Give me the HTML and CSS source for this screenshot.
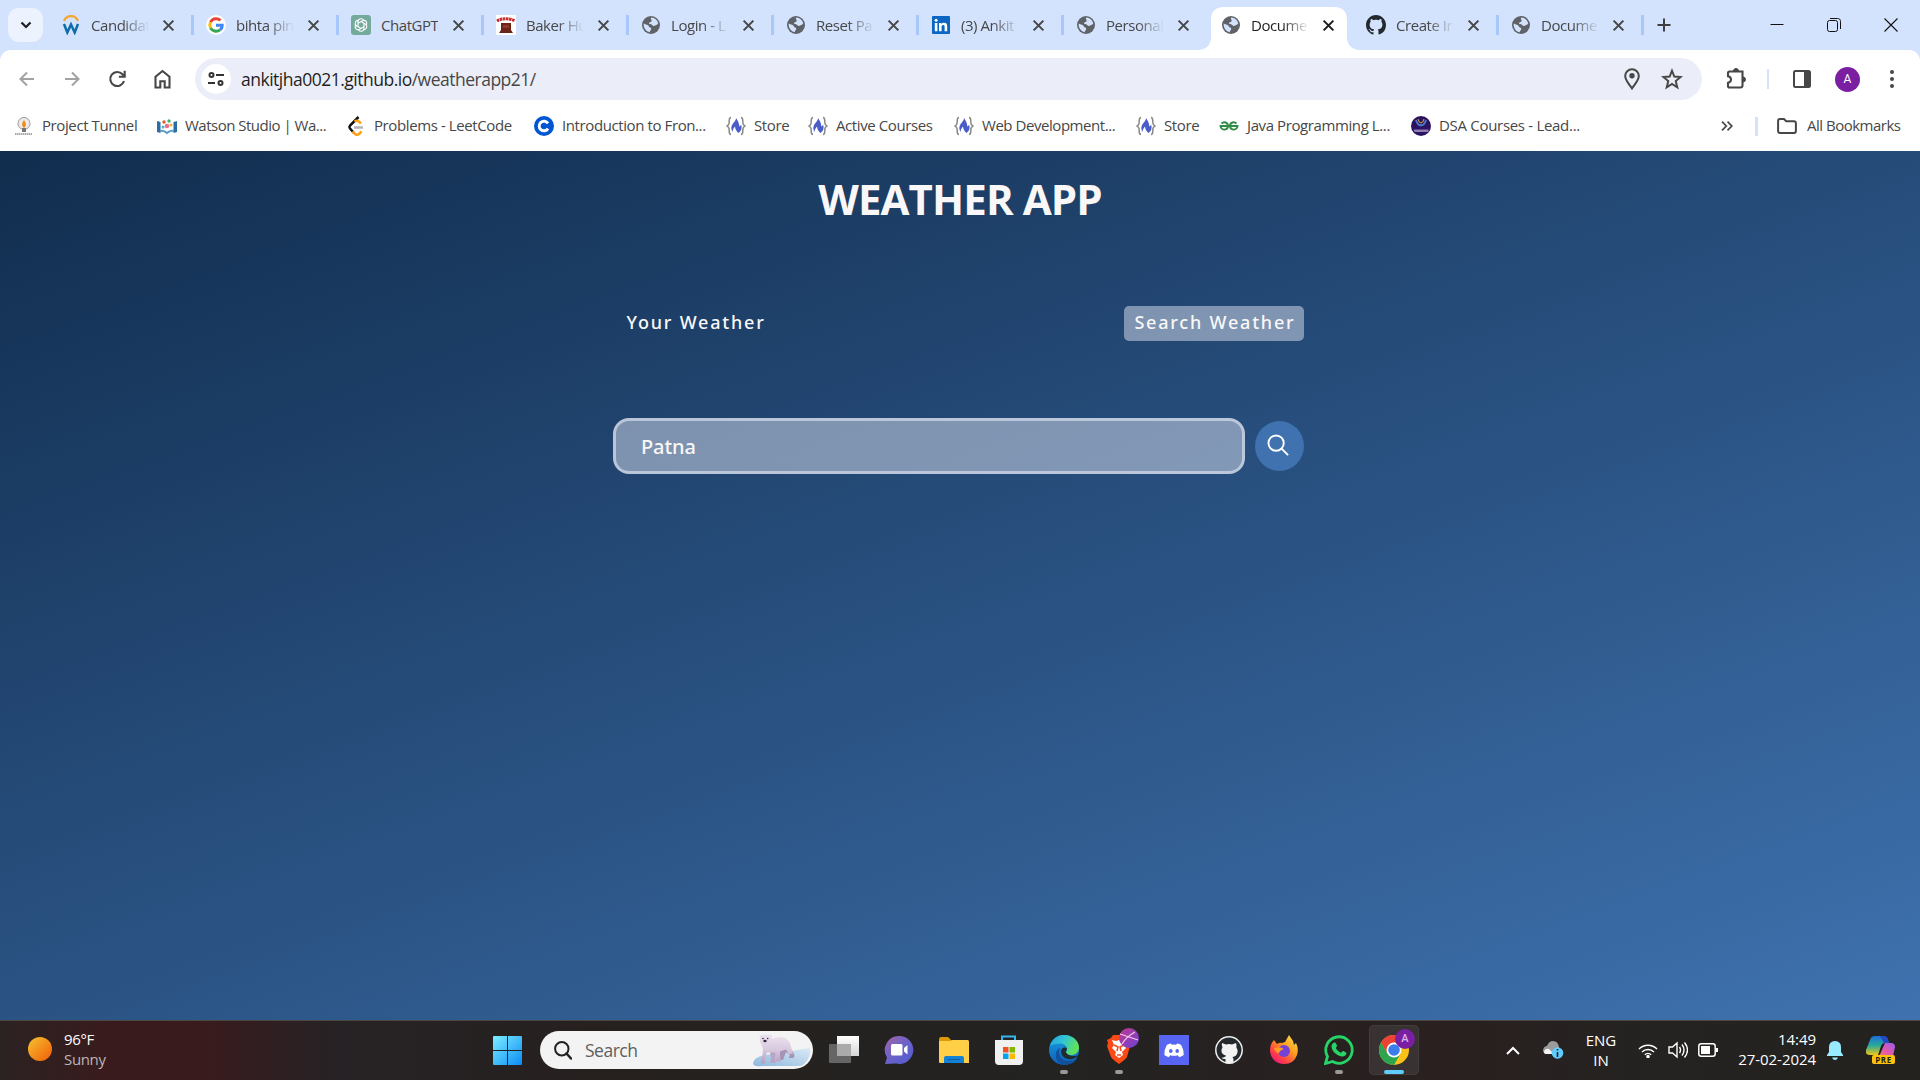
FILE: index.html
```html
<!DOCTYPE html>
<html lang="en">
<head>
<meta charset="utf-8">
<title>Weather App</title>
<link rel="stylesheet" href="styles.css">
</head>
<body>
<svg class="defs" width="0" height="0" aria-hidden="true">
  <defs>
    <linearGradient id="win" x1="0" y1="0" x2="1" y2="1"><stop offset="0" stop-color="#7deeff"/><stop offset="1" stop-color="#0a8cf5"/></linearGradient>
    <linearGradient id="sun" x1="0" y1="0" x2="1" y2="1"><stop offset="0" stop-color="#f5c232"/><stop offset=".8" stop-color="#f2710f"/></linearGradient>
    <linearGradient id="chat" x1="0" y1="0" x2="1" y2="1"><stop offset="0" stop-color="#a264a8"/><stop offset=".5" stop-color="#6a62c8"/><stop offset="1" stop-color="#4f5bd0"/></linearGradient>
    <linearGradient id="edgeTop" x1="0" y1="0" x2="1" y2=".4"><stop offset="0" stop-color="#1f9fe0"/><stop offset=".5" stop-color="#31c5d4"/><stop offset="1" stop-color="#62e25a"/></linearGradient>
    <linearGradient id="edgeLow" x1="0" y1="0" x2="0" y2="1"><stop offset="0" stop-color="#1aa0e0"/><stop offset="1" stop-color="#0b5fb8"/></linearGradient>
    <linearGradient id="fox" x1="1" y1="0" x2=".2" y2="1"><stop offset="0" stop-color="#fff04a"/><stop offset=".45" stop-color="#ff9a1f"/><stop offset=".8" stop-color="#ff3a4a"/><stop offset="1" stop-color="#e8168c"/></linearGradient>
    <linearGradient id="orb" x1="0" y1="0" x2="1" y2="1"><stop offset="0" stop-color="#c23a8c"/><stop offset="1" stop-color="#6a42d8"/></linearGradient>
    <linearGradient id="cop" x1="0" y1="0" x2="0" y2="1"><stop offset="0" stop-color="#1c6fd8"/><stop offset=".5" stop-color="#28a99a"/><stop offset="1" stop-color="#f0c816"/></linearGradient>
    <linearGradient id="cop2" x1="1" y1="0" x2="0" y2="1"><stop offset="0" stop-color="#9a5cf0"/><stop offset=".6" stop-color="#e65aa8"/><stop offset="1" stop-color="#f58a4a"/></linearGradient>
    <linearGradient id="ice" x1="1" y1="0" x2="0" y2="1"><stop offset="0" stop-color="#dbeaf7"/><stop offset="1" stop-color="#8db8dd"/></linearGradient>
    <linearGradient id="fur" x1="0" y1="0" x2="0" y2="1"><stop offset="0" stop-color="#ece2f0"/><stop offset=".5" stop-color="#d9cbe0"/><stop offset="1" stop-color="#b5a0c2"/></linearGradient>
    <linearGradient id="pane" x1="0" y1="0" x2="0" y2="1"><stop offset="0" stop-color="#fff"/><stop offset="1" stop-color="#d5d5d5"/></linearGradient>
    <symbol id="globe" viewBox="0 0 20 20"><circle cx="10" cy="10" r="9" fill="#5f6368"/><path d="M10.200 2.600c3.400.1 6.200 2.500 7 5.600-.6 1.500-2 1.600-2.900 2.300-1.200.8-2.500.4-3.100-.6-.5-.9-2.200-.1-3-1.100-.5-.8.3-1.600 1.300-1.800 1-.3 1.300-1 1.100-1.700-.3-.9-1.200-1.600-.4-2.700zM2.700 8.600c1.300 1 3.200.8 4.500 1.800.9.7.8 1.700 1.800 2.100 1.200.3 1.500 1.200 1 2.200-.3.8-1.300 1-1.200 2.600C5 16.700 2.300 13 2.700 8.600z" fill="#d3e3fd"/></symbol>
    <symbol id="x" viewBox="0 0 12 12"><path d="M1.500 1.500l9 9m0-9l-9 9" stroke="currentColor" stroke-width="1.900"/></symbol>
    <symbol id="octo" viewBox="0 0 16 16"><path fill="currentColor" d="M8 0C3.580 0 0 3.580 0 8c0 3.540 2.290 6.530 5.470 7.590.4.070.55-.17.55-.38 0-.19-.01-.82-.01-1.490-2.010.37-2.530-.49-2.690-.94-.09-.23-.48-.94-.82-1.130-.28-.15-.68-.52-.01-.53.63-.01 1.080.58 1.230.82.72 1.210 1.870.87 2.330.66.070-.52.28-.87.51-1.070-1.780-.2-3.640-.89-3.640-3.950 0-.87.31-1.590.82-2.150-.08-.2-.36-1.020.080-2.120 0 0 .67-.21 2.200.82.64-.18 1.320-.27 2-.27s1.360.09 2 .27c1.530-1.040 2.200-.82 2.200-.82.44 1.100.16 1.920.080 2.120.51.56.82 1.270.82 2.150 0 3.070-1.870 3.750-3.650 3.950.29.25.54.73.54 1.480 0 1.070-.01 1.930-.01 2.200 0 .21.15.46.55.38A8.010 8.010 0 0016 8c0-4.420-3.580-8-8-8z"/></symbol>
    <symbol id="brace" viewBox="0 0 20 20"><path d="M5 1.500C2.500 1.500 3.500 5 3 7.500 2.800 9 1.500 9.500 1 10c.5.500 1.800 1 2 2.500.5 2.500-.5 6 2 6M15 1.500c2.500 0 1.500 3.500 2 6 .2 1.500 1.500 2 2 2.500-.5.500-1.800 1-2 2.500-.5 2.500.5 6-2 6" fill="none" stroke="#888" stroke-width="1.500"/><path d="M10 2c.3 3-3.500 5-4.500 8.500-.5 2 .2 4 1 5.500.3-2.500 1-4 2.500-5.500.3 2.500 1 4 3.200 6.500 3-1.500 4-4.500 3-8.500-.5 1-1 1.600-1.800 2C13 7 12 4.500 10 2z" fill="#4a5cc8"/></symbol>
  </defs>
</svg>

<div class="screen">
  <header class="tabstrip">
    <button class="tab-search"><svg width="12" height="8" viewBox="0 0 12 8"><path d="M1.500 1.500L6 6l4.500-4.500" fill="none" stroke="#1f1f1f" stroke-width="2.200"/></svg></button>
    <nav class="tabs">
      <div class="tab"><svg class="fav" viewBox="0 0 20 20"><path d="M3 6a7.500 7.500 0 0 1 14 0" fill="none" stroke="#f3a633" stroke-width="2.200"/><path d="M3 9l3.300 8.500L10 9.500l3.700 8L17 9" fill="none" stroke="#0f6cab" stroke-width="2.500"/></svg><span>Candidat</span><svg class="close"><use href="#x"/></svg></div>
      <div class="tab"><svg class="fav" viewBox="0 0 20 20"><circle cx="10" cy="10" r="10" fill="#fff"/><g fill="none" stroke-width="3"><path d="M14.500 5.500A6.200 6.200 0 0 0 4.500 7.200" stroke="#ea4335"/><path d="M4.500 7.200a6.200 6.200 0 0 0 0 5.600" stroke="#fbbc05"/><path d="M4.500 12.800a6.200 6.200 0 0 0 9.500 2" stroke="#34a853"/><path d="M10 10.200h6.200c0 2-.8 3.700-2.200 4.700" stroke="#4285f4"/></g></svg><span>bihta pin</span><svg class="close"><use href="#x"/></svg></div>
      <div class="tab"><svg class="fav" viewBox="0 0 20 20"><rect width="20" height="20" rx="3" fill="#74aa9c"/><g fill="none" stroke="#fff" stroke-width="1.100"><path d="M7 11.700V6.500a3 3 0 0 1 5.700-1"/><path d="M7 11.700V6.500a3 3 0 0 1 5.700-1" transform="rotate(60 10 10)"/><path d="M7 11.700V6.500a3 3 0 0 1 5.700-1" transform="rotate(120 10 10)"/><path d="M7 11.700V6.500a3 3 0 0 1 5.700-1" transform="rotate(180 10 10)"/><path d="M7 11.700V6.500a3 3 0 0 1 5.700-1" transform="rotate(240 10 10)"/><path d="M7 11.700V6.500a3 3 0 0 1 5.700-1" transform="rotate(300 10 10)"/></g></svg><span>ChatGPT</span><svg class="close"><use href="#x"/></svg></div>
      <div class="tab"><svg class="fav" viewBox="0 0 20 20"><path fill="#fff" d="M0 0h20v20H0z"/><path d="M1 6c5-3 13-3 18 0" stroke="#c92a2a" stroke-width="3" stroke-dasharray="2.500 .6" fill="none"/><path d="M5 8h10v7l2 3H3l2-3z" fill="#6d2418"/><path d="M7 10h6v3H7z" fill="#8d3a2a"/></svg><span>Baker Hu</span><svg class="close"><use href="#x"/></svg></div>
      <div class="tab"><svg class="fav"><use href="#globe"/></svg><span>Login - L</span><svg class="close"><use href="#x"/></svg></div>
      <div class="tab"><svg class="fav"><use href="#globe"/></svg><span>Reset Pa</span><svg class="close"><use href="#x"/></svg></div>
      <div class="tab"><svg class="fav" viewBox="0 0 20 20"><rect x="1" y="1" width="18" height="18" rx="1" fill="#0a66c2"/><path d="M3.800 8h2.600v8.300H3.800zM8 8h2.500v1.200c.5-.9 1.400-1.400 2.600-1.400 2.500 0 3.100 1.600 3.100 3.800v4.700h-2.600v-4.200c0-1.200-.2-2.100-1.400-2.100s-1.600.9-1.600 2.100v4.200H8z" fill="#fff"/><circle cx="5.100" cy="5.200" r="1.500" fill="#fff"/></svg><span>(3) Ankit</span><svg class="close"><use href="#x"/></svg></div>
      <div class="tab bare"><svg class="fav"><use href="#globe"/></svg><span>Personal</span><svg class="close"><use href="#x"/></svg></div>
      <div class="tab bare active"><svg class="tab-shape" viewBox="0 0 162 43"><path d="M0 43c8 0 13-5 13-13V13C13 5 17 0 26 0h110c9 0 13 5 13 13v17c0 8 5 13 13 13z" fill="#fff"/></svg><svg class="fav"><use href="#globe"/></svg><span>Docume</span><svg class="close"><use href="#x"/></svg></div>
      <div class="tab"><svg class="fav octo"><use href="#octo"/></svg><span>Create In</span><svg class="close"><use href="#x"/></svg></div>
      <div class="tab"><svg class="fav"><use href="#globe"/></svg><span>Docume</span><svg class="close"><use href="#x"/></svg></div>
    </nav>
    <svg class="plus" viewBox="0 0 14 14"><path d="M7 .5v13M.5 7h13" stroke="#3c4043" stroke-width="2"/></svg>
    <div class="window-controls">
      <svg width="16" height="16"><path d="M1.500 7.500h13" stroke="#111"/></svg>
      <svg width="16" height="16" fill="none" stroke="#111"><rect x="1.500" y="3.500" width="10" height="11" rx="2"/><path d="M4 1.500h7.500c2 0 3 1 3 3v7.500"/></svg>
      <svg width="16" height="16"><path d="M1.500 1.500l13 13m0-13l-13 13" stroke="#111" stroke-width="1.100"/></svg>
    </div>
  </header>

  <div class="chrome-body">
    <div class="toolbar">
      <svg class="nav" viewBox="0 0 20 20"><path d="M17 10H4M10 3.500L3.500 10l6.500 6.500" stroke="#a3a3a3"/></svg>
      <svg class="nav" viewBox="0 0 20 20"><path d="M3 10h13M10 3.500l6.500 6.500-6.500 6.500" stroke="#a3a3a3"/></svg>
      <svg class="nav" viewBox="0 0 20 20"><path d="M17 12a7 7 0 1 1-1.500-6.700l1.900 2M17.700 1.800v5.900h-5.800" stroke="#474747"/></svg>
      <svg class="nav" viewBox="0 0 20 20"><path d="M3.500 18.500V7.800l7-5.800 7 5.800v10.700h-4.800v-6.300H8.300v6.300z" stroke="#474747"/></svg>
      <div class="omnibox">
        <div class="site-info"><svg width="16" height="16" fill="none" stroke="#333" stroke-width="2"><circle cx="3.500" cy="4" r="2"/><path d="M8 4h8M0 12h7"/><circle cx="12.500" cy="12" r="2"/></svg></div>
        <p class="url">ankitjha0021.github.io<em>/weatherapp21/</em></p>
        <svg class="pin" viewBox="0 0 16 22"><path d="M8 20.500C4.500 15.500 1.200 12 1.200 8a6.800 6.800 0 0 1 13.600 0c0 4-3.300 7.500-6.800 12.500z" fill="none" stroke="#474747" stroke-width="2"/><circle cx="8" cy="7.800" r="2.700" fill="#474747"/></svg>
        <svg class="star" viewBox="0 0 20 20"><path d="M10 2.500l2.100 5.300 5.700.4-4.400 3.700 1.400 5.600-4.800-3-4.800 3 1.400-5.600-4.400-3.700 5.700-.4z" fill="none" stroke="#474747" stroke-width="1.800"/></svg>
      </div>
      <svg class="puzzle" viewBox="0 0 22 22"><path d="M3.500 3.500h13v14q0 2-2 2h-11c-1 0-1.500-.5-1.500-1.500v-3.200c4-1 4-5.500 0-6.500V5q0-1.500 1.500-1.500z" fill="none" stroke="#474747" stroke-width="2.100"/><path d="M7.500 3a2.500 2.500 0 0 1 5 0zM17 9a2.500 2.500 0 0 1 0 5z" fill="#474747" stroke="#474747"/></svg>
      <i class="rule"></i>
      <svg class="panel" viewBox="0 0 18 18"><rect x="1" y="1" width="16" height="16" rx="1.500" fill="none" stroke="#474747" stroke-width="2"/><path d="M11 1h6v16h-6z" fill="#474747"/></svg>
      <b class="avatar">A</b>
      <svg class="dots" viewBox="0 0 4 20" fill="#474747"><circle cx="2" cy="3" r="2"/><circle cx="2" cy="10" r="2"/><circle cx="2" cy="17" r="2"/></svg>
    </div>

    <div class="bookmarks">
      <a class="bm b1"><svg viewBox="0 0 20 20"><circle cx="10" cy="7.500" r="6" fill="#efebe6" stroke="#999"/><path d="M10 4c2 3 3 5 0 8-3-3-2-5 0-8z" fill="#ef8b21"/><path d="M8 12h4v4H8z" fill="#777"/><path d="M1 18h17" stroke="#aaa" stroke-width="2" stroke-dasharray="1.500 .5"/></svg><span>Project Tunnel</span></a>
      <a class="bm b2"><svg viewBox="0 0 20 20"><path d="M0 5l3.500 1v11L0 16zM20 5l-3.500 1v11l3.500-1z" fill="#2d6da4"/><path d="M3 15q4-1 7 2 3-3 7-2" stroke="#5b9bc8" stroke-width="2" fill="none"/><circle cx="7" cy="6" r="1.700" fill="#e4572e"/><circle cx="12" cy="5" r="1.700" fill="#43b36b"/><circle cx="10" cy="10" r="2.300" fill="#ef6f8a"/><circle cx="14" cy="9" r="1.500" fill="#f2b632"/><circle cx="6" cy="11" r="1.500" fill="#45b7c9"/></svg><span>Watson Studio | Wa...</span></a>
      <a class="bm b3"><svg viewBox="0 0 20 20" fill="none" stroke-width="2.500"><path d="M12.500 1L4 9.500q-1.200 1.500 0 3l4 4.500" stroke="#111"/><path d="M6.500 15.500L9 18q2 1.500 4 0l2.500-2.500M8.500 5.500q2.500-1.500 4.500 0l2 2" stroke="#ffa116"/><path d="M8 11.500h9" stroke="#b3b3b3"/></svg><span>Problems - LeetCode</span></a>
      <a class="bm b4"><svg viewBox="0 0 20 20"><circle cx="10" cy="10" r="10" fill="#0056d2"/><path d="M14 7.400a4.800 4.800 0 1 0 0 5.200" fill="none" stroke="#fff" stroke-width="2.900"/></svg><span>Introduction to Fron...</span></a>
      <a class="bm b5"><svg><use href="#brace"/></svg><span>Store</span></a>
      <a class="bm b6"><svg><use href="#brace"/></svg><span>Active Courses</span></a>
      <a class="bm b7"><svg><use href="#brace"/></svg><span>Web Development...</span></a>
      <a class="bm b8"><svg><use href="#brace"/></svg><span>Store</span></a>
      <a class="bm b9"><svg viewBox="0 0 20 20" fill="none" stroke="#2f8d46" stroke-width="1.900"><path d="M2.500 7.500C5 5 9 6.500 9 10s-4.500 5-6.800 2C1.800 11.500 1.600 11 1.500 10h17c-.1 1-.3 1.500-.7 2-2.300 3-6.800 1.500-6.800-2s4-5 6.500-2.500"/></svg><span>Java Programming L...</span></a>
      <a class="bm b10"><svg viewBox="0 0 20 20"><circle cx="10" cy="10" r="10" fill="#2c1361"/><path d="M5 4q2 6 5 5 3 1 5-5" fill="none" stroke="#4b76c4" stroke-width="2"/><path d="M7 3q1 4 3 4 2 0 3-4" fill="none" stroke="#d7a53b"/><path d="M2.500 13.500h15v2.500h-14z" fill="#8f7fb3"/></svg><span>DSA Courses - Lead...</span></a>
      <svg class="more" viewBox="0 0 12 10"><path d="M1 .7L5.300 5 1 9.300M6.500.7L10.800 5 6.500 9.300" fill="none" stroke="#474747" stroke-width="1.700"/></svg>
      <i class="rule wide"></i>
      <a class="bm all"><svg viewBox="0 0 20 16"><path d="M1.100 13V3q0-1.900 1.900-1.900h4l2.200 2.200H17q1.900 0 1.900 1.900V13q0 1.900-1.900 1.900H3Q1.100 14.900 1.100 13z" fill="none" stroke="#474747" stroke-width="2"/></svg><span>All Bookmarks</span></a>
    </div>
  </div>

  <main class="weather">
    <h1>WEATHER APP</h1>
    <div class="weather-tabs"><p>Your Weather</p><p class="current">Search Weather</p></div>
    <form class="search-form">
      <div class="city">Patna</div>
      <div class="go"><svg viewBox="0 0 24 24" fill="none" stroke="#fff" stroke-width="2"><circle cx="9.500" cy="9.500" r="8"/><path d="M15.200 15.200l6.800 6.800"/></svg></div>
    </form>
  </main>

  <footer class="taskbar">
    <div class="forecast"><svg width="24" height="24"><circle cx="12" cy="12" r="12" fill="url(#sun)"/></svg><p>96°F<br><span>Sunny</span></p></div>
    <svg class="start" viewBox="0 0 29 29" fill="url(#win)"><path d="M1 0h13v14H0V1q0-1 1-1zM15 0h13q1 0 1 1v13H15zM0 15h14v14H1q-1 0-1-1zM15 15h14v13q0 1-1 1H15z"/></svg>
    <div class="search">
      <svg class="glass" viewBox="0 0 18 19"><circle cx="7.800" cy="7.800" r="6.700" fill="none" stroke="#222" stroke-width="2"/><path d="M12.500 12.500l4.500 5" stroke="#222" stroke-width="2.500" stroke-linecap="round"/></svg>
      <span>Search</span>
      <svg class="bear" viewBox="0 0 57 33"><path d="M0 29q1-6 12-8l45-7q1 9-5 15-2 3-7 3H9q-9 1-9-3z" fill="url(#ice)"/><path d="M27 14l9-2q3 4 5 8 1 3-1 4h-4q0-2 1-3l-4-3-3 8h-5z" fill="#a793b5"/><path d="M17 18l6 0-1 9 1 2h-6l1-4z" fill="#b8a6c4"/><path d="M6.500 2.500Q7 .5 9 1q4-1 7 0 2-1.500 3 .5 0 2-1 3 3 0 5-1 6-1.500 10 1 4 3 5 8l2 7-4 1-3-5-6 2 0 6 1 4h-6l1-4-1-5-8 0-2 6 0 5H8l1-6 1-8-1-4Q6 8 7 4z" fill="url(#fur)"/><circle cx="10" cy="4.500" r=".8" fill="#32283a"/><circle cx="14.700" cy="4.500" r=".8" fill="#32283a"/><ellipse cx="12" cy="7" rx="1.700" ry="1.300" fill="#32283a"/></svg>
    </div>
    <div class="apps">
      <div class="app"><svg viewBox="0 0 30 30"><rect x="8" y="1" width="22" height="20" fill="url(#pane)"/><rect y="9" width="22" height="19" rx="1" fill="#777" opacity=".8"/><path d="M8 9h14v12H8z" fill="#aaa"/></svg></div>
      <div class="app"><svg viewBox="0 0 30 30"><path d="M15 1a14 14 0 1 1-3 27.600L1 29l2-6.500A14 14 0 0 1 15 1z" fill="url(#chat)"/><rect x="7" y="9" width="11.500" height="11.500" rx="1.500" fill="#fff"/><path d="M20 13l3.500-3v9.500L20 16.500z" fill="#fff"/></svg></div>
      <div class="app"><svg viewBox="0 0 30 30"><path d="M0 5q0-3 2-3h7l3 3h16q2 0 2 2v20H0z" fill="#dc9a08"/><path d="M0 6h11l3-1h14q2 0 2 2v21H1q-1 0-1-1z" fill="#ffcf48"/><path d="M5 28v-5q0-2 2-2h16q2 0 2 2v5z" fill="#1482d4"/><path d="M9 24.500h12" stroke="#0b5fa5"/></svg></div>
      <div class="app"><svg viewBox="0 0 30 30"><path d="M8 6V1.500h13V6" fill="none" stroke="#36b6ee" stroke-width="2"/><path d="M1 5h28v21q0 4-4 4H5q-4 0-4-4z" fill="#f0f0f0"/><path d="M9 12h5.500v5.500H9z" fill="#f25022"/><path d="M15.500 12H21v5.500h-5.500z" fill="#7fba00"/><path d="M9 18.500h5.500V24H9z" fill="#00a4ef"/><path d="M15.500 18.500H21V24h-5.500z" fill="#ffb900"/></svg></div>
      <div class="app run"><svg viewBox="0 0 30 30"><circle cx="15" cy="15" r="15" fill="url(#edgeLow)"/><path d="M1 11C3 4 8 0 15 0c9 0 15 6 15 12.500 0 5-4 7.500-8 7.500-3 0-5-1-5-2.500 0-1 1-1.500 1-3.500 0-3-3-5.500-7-5.500-4.500 0-8 1-10 2.500z" fill="url(#edgeTop)"/><path d="M11 13c-3 7 2 13 9 13 3.500 0 6-1 8.500-3-3 5-8 7-13 7C9 29.500 6 23 7 18c.5-2.500 2-4 4-5z" fill="#124f9c"/><path d="M17 17.500c-1-1 1-2 1-4-1-2-6-1.500-6 3 0 5 5 8.500 11 7.500 3-.5 5-2 6.500-4-2 1.500-10 2-12.500-2.500z" fill="#222b30"/></svg></div>
      <div class="app run"><svg class="big" viewBox="0 0 36 38"><path d="M10 8h11l2 3 3 1v4l1 3-3 11q-1 2-8 7-7-5-8-7L4 19l1-3-1-3 4-2z" fill="#fb4a16"/><path d="M9 13l4 1 3-1 3 1 4-1-2 5 2 3-4 4 1 3-4 3-4-3 1-3-4-4 2-3z" fill="#fff"/><path d="M11 18l4 2-1 4M21 18l-4 2 1 4M14 28h4" stroke="#fb4a16" stroke-width="1.500" fill="none"/><circle cx="26" cy="11" r="10" fill="url(#orb)"/><path d="M17 7l18 6M19 17q4-7 13-12" stroke="#f6c5e5" stroke-width="1.300" fill="none"/></svg></div>
      <div class="app"><svg viewBox="0 0 30 30"><path fill="#5865f2" d="M0 0h30v30H0z"/><path d="M12 8.500l.8 1.200q2.200-.4 4.400 0l.8-1.200q2.400.3 4.200 1.500 2.500 4 2.500 10-2 1.600-4.500 2.200l-1.300-2q-3.900 1-7.800 0l-1.300 2q-2.500-.6-4.500-2.200 0-6 2.500-10 1.800-1.200 4.200-1.500z" fill="#fff"/><ellipse cx="11.800" cy="16" rx="1.800" ry="2" fill="#5865f2"/><ellipse cx="18.200" cy="16" rx="1.800" ry="2" fill="#5865f2"/></svg></div>
      <div class="app"><svg viewBox="0 0 30 30"><circle cx="15" cy="15" r="13.200" fill="#24292e" stroke="#eee" stroke-width="1.500"/><path d="M8 8l4 1.500q3-.8 6 0L22 8q1 2.500.4 4.500 1.600 2 1.100 5-1 4-5 4.500 1 1 1 3v3.500h-8V24q-3 .5-4-1.500 2 .5 4-1l.5-1q-4-.8-4.500-4-.3-2.500 1-4Q7.300 10.500 8 8z" fill="#f2f2f2"/></svg></div>
      <div class="app"><svg viewBox="0 0 30 30"><path d="M5 5l3 4q3-2 5-1l3-1 4-7 4 6 1 4 2-2q3 6 1 12-3 9-13 9C6 29 1 22 1 15q0-6 4-10z" fill="url(#fox)"/><circle cx="15" cy="16" r="6" fill="#7542d8"/><path d="M5 13q6-2 10 1-4 1-5 4-4 0-5-5z" fill="#ff9a25"/></svg></div>
      <div class="app run"><svg viewBox="0 0 30 30"><path d="M1.500 28.500l2-7A13.200 13.200 0 1 1 8.500 26.500z" fill="none" stroke="#25d366" stroke-width="2.800"/><path d="M11 7.500c1 0 2.200 3.300 2 3.800-.3.800-1.300 1.300-1 2 1 2 2.500 3.500 4.800 4.400.8.300 1.500-1.700 2.200-1.600.6.100 3.500 1.400 3.500 2 0 2-2 3.500-4 3.500-5 0-11-5.500-11-10 0-2.500 1.500-4.200 3.500-4.100z" fill="#25d366"/></svg></div>
      <div class="app run focused"><svg viewBox="0 0 30 30"><circle cx="15" cy="15" r="15" fill="#fbc116"/><path d="M2 7.500A15 15 0 0 1 28 7.500H15L8.500 19z" fill="#ea4335"/><path d="M2 7.500A15 15 0 0 0 15 30l6.500-11.300H8.500z" fill="#2da44e"/><circle cx="15" cy="15" r="7.500" fill="#fff"/><circle cx="15" cy="15" r="5.800" fill="#3b7ded"/></svg><b class="badge">A</b></div>
    </div>
    <div class="tray">
      <svg class="up" width="14" height="9"><path d="M1 8l6-6 6 6" fill="none" stroke="#fff" stroke-width="2"/></svg>
      <svg class="cloud" width="21" height="18"><path d="M4 13q-4 0-4-4 1-4 4-4 2-5 6-5 5 0 6 6v7z" fill="#9b9b9b"/><path d="M1 11q1-4 5-3l5 5H4q-3 0-3-2z" fill="#f3f3f3"/><circle cx="14.500" cy="12" r="5.800" fill="#60cdff"/><path d="M14.500 8v1.500m0 1.500v5" stroke="#222" stroke-width="1.600"/></svg>
      <p class="lang">ENG<br>IN</p>
      <svg class="wifi" width="20" height="15" fill="none" stroke="#fff" stroke-width="1.500"><path d="M1 6a12.500 12.500 0 0 1 18 0M4 9a8.500 8.500 0 0 1 12 0M6.800 11.700a4.600 4.600 0 0 1 6.400 0"/><circle cx="10" cy="13.500" r="1" fill="#fff"/></svg>
      <svg class="vol" width="20" height="18" fill="none" stroke="#fff" stroke-width="1.400"><path d="M1 6h3.500L9 2v14l-4.500-4H1zM11.500 6q2 3 0 6M14 3.500q4 5.500 0 11M16.500 1.500q6 7.500 0 15"/></svg>
      <svg class="batt" width="20" height="14"><rect x=".8" y=".8" width="16.400" height="12.400" rx="2.500" fill="none" stroke="#fff" stroke-width="1.500"/><path d="M3 3h9v8H3zM18 5h2v4h-2z" fill="#fff"/></svg>
      <p class="clock">14:49<br>27-02-2024</p>
      <svg class="bell" width="16" height="19"><path d="M8 0q6 .5 6 6v5l2 3v1H0v-1l2-3V6q0-5.500 6-6zM5 16.500h6q-1 2.500-3 2.500t-3-2.500z" fill="#99ebff"/></svg>
      <div class="copilot"><svg width="29" height="28"><path d="M9 0h8q4 0 5 4l1 3h-4q-3 0-4 3l-3 9H4q-5 0-4-5L4 4q1-4 5-4z" fill="url(#cop)"/><path d="M14 0h3q4 0 5 4l1 3h-5z" fill="#2348c8"/><path d="M19 7h6q4 0 4 4l-2 9H11q3 0 4-4z" fill="url(#cop2)"/></svg><b>PRE</b></div>
    </div>
  </footer>
</div>
</body>
</html>
```
FILE: styles.css
```css
* { box-sizing: border-box; }
body { margin: 0; font-family: "Open Sans", "Noto Sans", sans-serif; }
p, h1 { margin: 0; }
svg { display: block; flex: none; }
.defs { position: absolute; }
.screen { width: 1920px; height: 1080px; overflow: hidden; display: flex; flex-direction: column; background: #d3e3fd; }

/* tab strip */
.tabstrip { height: 50px; flex: none; display: flex; align-items: center; padding-left: 8px; position: relative; }
.tab-search { width: 35px; height: 34px; margin-right: 6px; padding: 0; border: 0; border-radius: 11px; background: #ecf2fe; display: grid; place-items: center; }
.tabs { display: flex; }
.tab { width: 145px; height: 20px; padding-left: 12px; display: flex; align-items: center; position: relative; border-right: 3px solid #a8c7fa; color: #474747; }
.tab.bare { border-color: transparent; }
.tab span { width: 57px; margin-left: 10px; overflow: hidden; white-space: nowrap; font-size: 15px; line-height: 22px; letter-spacing: -.45px; -webkit-mask-image: linear-gradient(90deg, #000 55%, transparent 102%); mask-image: linear-gradient(90deg, #000 55%, transparent 102%); }
.tab:nth-child(3) span { -webkit-mask-image: none; mask-image: none; }
.fav { width: 20px; height: 20px; }
.octo { color: #24292f; }
.close { width: 13px; height: 13px; margin-left: 14px; }
.active { color: #1f1f1f; }
.active > * { position: relative; }
.active .tab-shape { position: absolute; left: -11px; top: -8px; width: 162px; height: 43px; }
.plus { width: 14px; height: 14px; margin-left: 13px; }
.window-controls { display: flex; gap: 41px; margin-left: 98px; }

/* toolbar */
.chrome-body { flex: none; height: 101px; background: #fff; border-radius: 11px 11px 0 0; }
.toolbar { height: 58px; display: flex; align-items: center; padding-left: 17px; }
.nav { width: 20px; height: 20px; margin-right: 25px; fill: none; stroke-width: 2.100; }
.omnibox { width: 1507px; height: 42px; margin-left: -2px; padding-left: 6px; border-radius: 21px; background: #ebeef8; display: flex; align-items: center; }
.site-info { flex: none; width: 30px; height: 30px; border-radius: 50%; background: #fff; display: grid; place-items: center; }
.url { flex: none; width: 1393px; padding-left: 10px; font-size: 17.500px; letter-spacing: -.5px; color: #1f1f1f; }
.url em { font-style: normal; color: #474747; }
.pin { width: 16px; height: 22px; }
.star { width: 22px; height: 22px; margin-left: 21px; }
.puzzle { width: 22px; height: 22px; margin-left: 24px; }
.rule { width: 2px; height: 20px; margin-left: 19px; background: #d3e3fd; }
.panel { width: 18px; height: 18px; margin-left: 24px; }
.avatar { width: 25px; height: 25px; margin-left: 24px; border-radius: 50%; background: #7b1fa2; color: #fff; font: 12px/25px Roboto, sans-serif; text-align: center; }
.dots { width: 4px; height: 20px; margin-left: 30px; }

/* bookmarks bar */
.bookmarks { height: 36px; display: flex; align-items: center; padding-left: 14px; }
.bm { display: flex; align-items: center; gap: 8px; font-size: 15px; line-height: 20px; letter-spacing: -.4px; white-space: nowrap; color: #474747; }
.bm span { padding-bottom: 2px; }
.bm svg { width: 20px; height: 20px; }
.b1 { width: 143px; } .b2 { width: 189px; letter-spacing: -.5px; } .b3 { width: 188px; } .b4 { width: 192px; } .b5 { width: 82px; }
.b6 { width: 146px; } .b7 { width: 182px; letter-spacing: -.45px; } .b8 { width: 83px; } .b9 { width: 192px; } .b10 { width: 310px; letter-spacing: -.3px; }
.more { width: 12px; height: 10px; }
.rule.wide { width: 3px; height: 19px; margin-left: 22px; }
.bm.all { margin-left: 19px; gap: 10px; letter-spacing: -.5px; }
.bm.all svg { height: 16px; }

/* weather page */
.weather { height: 869px; flex: none; padding-top: 20px; background: linear-gradient(160deg, #112d4e 0%, #3f72af 100%); color: #f9f7f7; font-family: "Noto Sans", sans-serif; display: flex; flex-direction: column; align-items: center; }
.weather h1 { font: 700 42px/56px "Open Sans", sans-serif; letter-spacing: -.9px; }
.weather-tabs { width: 687px; margin-top: 79px; display: flex; justify-content: space-between; font-size: 18px; font-weight: 500; line-height: 25px; letter-spacing: 1.800px; white-space: nowrap; }
.weather-tabs p { padding: 4px 8px 6px 10px; }
.weather-tabs .current { border-radius: 5px; background: rgba(219, 226, 239, .5); }
.search-form { width: 691px; margin: 77px 3px 0 0; display: flex; gap: 10px; align-items: center; }
.city { width: 632px; height: 56px; padding-left: 25px; border: 3px solid rgba(219, 226, 239, .65); border-radius: 16px; background: rgba(219, 226, 239, .5); font-size: 20px; font-weight: 500; line-height: 51px; letter-spacing: -.1px; }
.go { width: 49px; height: 50px; border-radius: 50%; background: #3f72af; display: grid; place-items: center; padding: 0 2px 2px 0; }
.go svg { width: 23px; height: 23px; }

/* taskbar */
.taskbar { height: 60px; flex: none; display: flex; align-items: center; padding-bottom: 1px; border-top: 1px solid #4b4744; background: linear-gradient(90deg, #2b2222 0, #3a1b1d 110px, #3a1b1d 200px, #272225 330px, #26211f 600px, #232321 1060px, #2a2020 1440px, #242321 1650px, #24221f 1920px); color: #fff; font-size: 15px; line-height: 20px; }
.forecast { width: 465px; padding: 0 0 2px 28px; display: flex; gap: 12px; align-items: center; letter-spacing: -.35px; }
.forecast span { color: #bdb5b5; }
.start { width: 29px; height: 29px; margin-left: 28px; }
.search { width: 273px; height: 38px; margin-left: 18px; padding-left: 14px; border-radius: 19px; background: #f3f3f3; display: flex; align-items: center; }
.glass { width: 18px; height: 19px; }
.search span { flex: none; width: 181px; padding-left: 13px; font-size: 17.500px; letter-spacing: -.5px; color: #5f5f5f; }
.bear { width: 57px; height: 33px; }
.apps { display: flex; margin-left: 6px; }
.app { width: 50px; height: 50px; margin: 0 0 0 5px; border-radius: 5px; display: grid; place-items: center; position: relative; }
.apps .app:first-child { margin-left: 0; }
.app svg { width: 30px; height: 30px; }
.app svg.big { width: 36px; height: 38px; margin: -8px -4px 0 0; }
.app.run::after { content: ""; position: absolute; left: 21px; bottom: 1px; width: 8px; height: 4px; border-radius: 2px; background: #9b9998; }
.app.focused { background: #383232; box-shadow: inset 0 0 0 1px #423c3b; }
.app.focused::after { left: 15px; width: 20px; background: #60cdff; }
.badge { position: absolute; right: 4px; top: 4px; width: 20px; height: 20px; border-radius: 50%; background: #7b1fa2; color: #d9b3e8; font: 500 11px/20px Roboto, sans-serif; text-align: center; }
.tray { display: flex; align-items: center; letter-spacing: -.05px; }
.up { margin-left: 87px; }
.cloud { margin-left: 23px; }
.lang { width: 36px; margin-left: 19px; text-align: center; }
.wifi { margin-left: 19px; }
.vol, .batt { margin-left: 10px; }
.clock { width: 88px; margin-left: 10px; padding-bottom: 2px; text-align: right; white-space: nowrap; }
.bell { margin-left: 11px; }
.copilot { margin-left: 23px; width: 29px; height: 28px; position: relative; }
.copilot b { position: absolute; left: 6px; bottom: 0; width: 23px; height: 9px; border-radius: 2px; background: #ffc20e; color: #221; font: 700 8px/9px "Open Sans", sans-serif; letter-spacing: .5px; text-align: center; }
```
